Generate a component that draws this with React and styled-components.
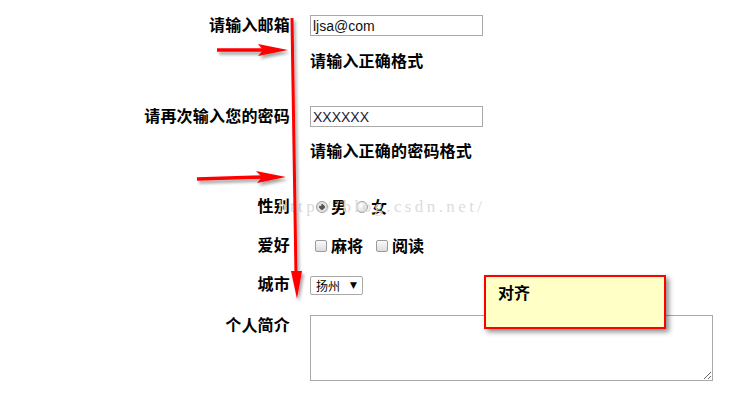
import React from "react";
import styled, { createGlobalStyle } from "styled-components";

const GlobalStyle = createGlobalStyle`
  html, body {
    margin: 0;
    padding: 0;
    background: #fff;
  }
  body {
    font-family: "Noto Sans CJK SC", "Liberation Sans", sans-serif;
    color: #000;
  }
`;

const Page = styled.div`
  position: relative;
  width: 746px;
  height: 405px;
  overflow: hidden;
`;

const Form = styled.form`
  display: flex;
  flex-direction: column;
`;

const Row = styled.div`
  display: grid;
  grid-template-columns: 290px 1fr;
  grid-template-rows: ${(p) => p.$h}px;
  column-gap: 20px;
  align-items: ${(p) => (p.$top ? "start" : "center")};
  margin-top: ${(p) => p.$mt}px;
`;

// Noto CJK sits a touch low in its line box, the bottom margin lifts it
const Label = styled.label`
  text-align: right;
  font-size: 16px;
  line-height: 20px;
  font-weight: 700;
  letter-spacing: 0.2px;
  margin-bottom: ${(p) => (p.$top ? 0 : 4)}px;
  margin-top: ${(p) => (p.$top ? -1 : 0)}px;
`;

const Field = styled.div`
  display: flex;
  align-items: center;
`;

const TextInput = styled.input`
  box-sizing: border-box;
  width: 173px;
  height: 21px;
  margin: 0;
  padding: 0 2px;
  border: 1px solid #a9a9a9;
  border-radius: 0;
  font-family: "Liberation Sans", Arial, sans-serif;
  font-size: 14px;
  color: ${(p) => p.$color || "#111"};
  outline: none;
`;

const Hint = styled.div`
  font-size: 16px;
  line-height: 20px;
  font-weight: 700;
  letter-spacing: 0.2px;
  margin-bottom: 4px;
`;

const Radio = styled.input.attrs({ type: "radio" })`
  appearance: none;
  box-sizing: border-box;
  width: 12px;
  height: 12px;
  margin: 0 3px 0 ${(p) => p.$ml}px;
  border-radius: 50%;
  border: 1px solid #a0a0a0;
  background: radial-gradient(circle at 40% 35%, #fdfdfd, #d6d6d6);
  &:checked {
    background: radial-gradient(circle, #555 0 2.5px, #e8e8e8 3px, #cfcfcf);
  }
`;

const Check = styled.input.attrs({ type: "checkbox" })`
  appearance: none;
  box-sizing: border-box;
  width: 12px;
  height: 12px;
  margin: 0 4px 0 ${(p) => p.$ml}px;
  border-radius: 2px;
  border: 1px solid #9a9a9a;
  background: linear-gradient(#fafafa, #dcdcdc);
`;

const OptText = styled.span`
  font-size: 16px;
  line-height: 20px;
  font-weight: 700;
  margin-bottom: 3px;
`;

const SelectBox = styled.div`
  box-sizing: border-box;
  width: 53px;
  height: 19px;
  display: flex;
  align-items: center;
  justify-content: space-between;
  padding: 0 5px 0 5px;
  border: 1px solid #a9a9a9;
  border-radius: 2px;
  font-size: 12px;
  line-height: 17px;
  background: #fff;
`;

const Caret = styled.span`
  font-size: 9px;
  font-family: "DejaVu Sans", sans-serif;
`;

const TextArea = styled.textarea`
  box-sizing: border-box;
  width: 403px;
  height: 66px;
  margin: 0;
  border: 1px solid #a9a9a9;
  border-radius: 0;
  resize: both;
  outline: none;
`;

const Watermark = styled.div`
  position: absolute;
  left: 278px;
  top: 197px;
  font-family: "Liberation Serif", serif;
  font-size: 17px;
  letter-spacing: 3.4px;
  line-height: 20px;
  color: #dcdcdc;
  pointer-events: none;
  white-space: nowrap;
`;

const Note = styled.div`
  position: absolute;
  left: 484px;
  top: 275px;
  box-sizing: border-box;
  width: 182px;
  height: 54px;
  padding: 5px 0 0 12px;
  background: #ffffc6;
  border: 2px solid #f00;
  box-shadow: 3px 3px 5px rgba(0, 0, 0, 0.45);
  font-size: 16px;
  line-height: 20px;
  font-weight: 700;
`;

const Overlay = styled.svg`
  position: absolute;
  left: 0;
  top: 0;
  pointer-events: none;
`;

function Arrows() {
  return (
    <Overlay width="746" height="405" viewBox="0 0 746 405">
      <defs>
        <filter id="sh" x="-20%" y="-20%" width="140%" height="140%">
          <feDropShadow dx="2" dy="3" stdDeviation="1.5" floodColor="#000" floodOpacity="0.35" />
        </filter>
      </defs>
      <g fill="#f00" stroke="#f00" filter="url(#sh)">
        <line x1="292" y1="18" x2="296" y2="276" strokeWidth="3" />
        <polygon points="291,271 302,271 297,299" stroke="none" />
        <line x1="217" y1="50" x2="264" y2="50" strokeWidth="3.5" />
        <polygon points="258,44 288,50 258,56 263,50" stroke="none" />
        <line x1="197" y1="179" x2="263" y2="177" strokeWidth="3.5" />
        <polygon points="256,171 286,177 257,183 262,177" stroke="none" />
      </g>
    </Overlay>
  );
}

export default function App() {
  return (
    <Page>
      <GlobalStyle />
      <Watermark>http://blog.csdn.net/</Watermark>
      <Form>
        <Row $mt={15} $h={21}>
          <Label>请输入邮箱</Label>
          <Field>
            <TextInput defaultValue="ljsa@com" />
          </Field>
        </Row>
        <Row $mt={16} $h={20}>
          <span />
          <Hint>请输入正确格式</Hint>
        </Row>
        <Row $mt={34} $h={21}>
          <Label>请再次输入您的密码</Label>
          <Field>
            <TextInput defaultValue="XXXXXX" $color="#1a1a3a" />
          </Field>
        </Row>
        <Row $mt={15} $h={20}>
          <span />
          <Hint>请输入正确的密码格式</Hint>
        </Row>
        <Row $mt={35} $h={20}>
          <Label>性别</Label>
          <Field>
            <Radio name="sex" defaultChecked $ml={6} />
            <OptText>男</OptText>
            <Radio name="sex" $ml={9} />
            <OptText>女</OptText>
          </Field>
        </Row>
        <Row $mt={19} $h={20}>
          <Label>爱好</Label>
          <Field>
            <Check $ml={5} />
            <OptText>麻将</OptText>
            <Check $ml={13} />
            <OptText>阅读</OptText>
          </Field>
        </Row>
        <Row $mt={19} $h={20}>
          <Label>城市</Label>
          <Field>
            <SelectBox>
              <span>扬州</span>
              <Caret>▼</Caret>
            </SelectBox>
          </Field>
        </Row>
        <Row $mt={20} $h={66} $top>
          <Label $top>个人简介</Label>
          <Field>
            <TextArea />
          </Field>
        </Row>
      </Form>
      <Arrows />
      <Note>对齐</Note>
    </Page>
  );
}
